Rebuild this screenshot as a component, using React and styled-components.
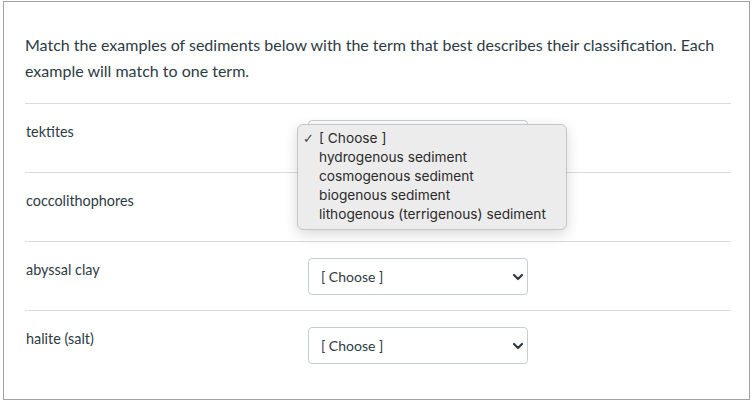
import React from "react";
import styled, { createGlobalStyle } from "styled-components";

const Global = createGlobalStyle`
  html, body { margin: 0; padding: 0; background: #fff; }
  body { font-family: Lato, "Open Sans", sans-serif; color: #2d3b45; }
`;

const Frame = styled.div`
  box-sizing: border-box;
  width: 747px;
  height: 399px;
  margin: 1px 0 0 3px;
  border: 1px solid #a3a3a3;
  padding: 0 18px 0 21px;
  overflow: hidden;
`;

const Prompt = styled.p`
  margin: 0;
  padding: 30px 0 19px 0;
  font-size: 16px;
  line-height: 26px;
  color: #2d3b45;
`;

const Row = styled.div`
  position: relative;
  display: flex;
  align-items: flex-start;
  border-top: 1px solid #d9dcde;
  padding: 16px 0 15px 1px;
`;

const Label = styled.div`
  width: 282px;
  flex: none;
  padding-top: 2px;
  font-size: 14.4px;
  line-height: 20px;
  color: #2d3b45;
`;

const SelectBox = styled.div`
  position: relative;
  box-sizing: border-box;
  width: 220px;
  height: 37px;
  border: 1px solid #c7cdd1;
  border-radius: 4px;
  background: #fff;
  display: flex;
  align-items: center;
  justify-content: space-between;
  padding: 0 3px 0 12px;
  font-size: 14px;
  color: #2d3b45;
`;

const Popup = styled.div`
  position: absolute;
  left: -12px;
  top: 3px;
  width: 270px;
  box-sizing: border-box;
  padding: 4px 0 5px;
  background: #ececec;
  border: 1px solid #c6c6c6;
  border-radius: 6px;
  box-shadow: 0 4px 14px rgba(0, 0, 0, 0.16);
  z-index: 5;
  font-family: Inter, "Liberation Sans", sans-serif;
  font-size: 13.7px;
  color: #2a2a2a;
`;

const Option = styled.div`
  position: relative;
  height: 19px;
  line-height: 19px;
  padding-left: 21px;
  white-space: nowrap;
`;

const Check = styled.span`
  position: absolute;
  left: 5px;
  top: 0;
  font-size: 13px;
  font-family: "DejaVu Sans", sans-serif;
  color: #444;
`;

const Chevron = () => (
  <svg width="12" height="8" viewBox="0 0 12 8">
    <polyline
      points="2,2 6,6 10,2"
      fill="none"
      stroke="#2d3b45"
      strokeWidth="2.2"
      strokeLinecap="round"
      strokeLinejoin="round"
    />
  </svg>
);

const options = [
  "[ Choose ]",
  "hydrogenous sediment",
  "cosmogenous sediment",
  "biogenous sediment",
  "lithogenous (terrigenous) sediment",
];

const items = ["tektites", "coccolithophores", "abyssal clay", "halite (salt)"];

export default function App() {
  return (
    <>
      <Global />
      <Frame>
        <Prompt>
          Match the examples of sediments below with the term that best describes their classification. Each
          example will match to one term.
        </Prompt>
        {items.map((it, i) => (
          <Row key={it}>
            <Label>{it}</Label>
            <SelectBox>
              <span>[ Choose ]</span>
              <Chevron />
              {i === 0 && (
                <Popup>
                  {options.map((o, j) => (
                    <Option key={o}>
                      {j === 0 && <Check>✓</Check>}
                      {o}
                    </Option>
                  ))}
                </Popup>
              )}
            </SelectBox>
          </Row>
        ))}
      </Frame>
    </>
  );
}
